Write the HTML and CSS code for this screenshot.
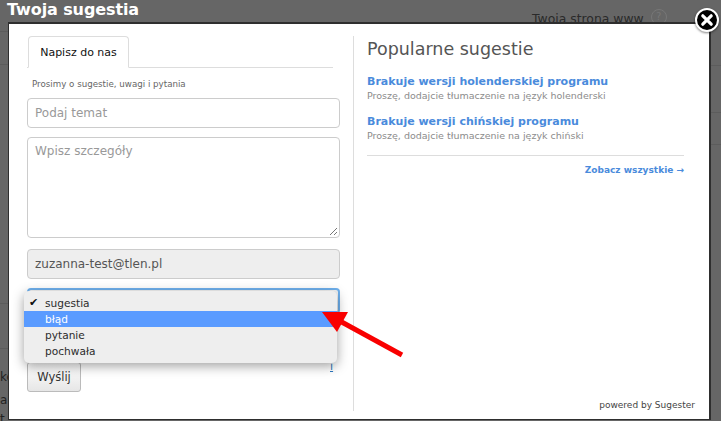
FILE: index.html
```html
<!DOCTYPE html>
<html lang="pl">
<head>
<meta charset="utf-8">
<title>Twoja sugestia</title>
<link rel="stylesheet" href="styles.css">
</head>
<body>
<div class="backdrop">
  <h1 class="page-title">Twoja sugestia</h1>
  <div class="site-label">Twoja strona www <span class="help">?</span></div>
  <i class="rule r1"></i><i class="rule r2"></i><i class="rule r3"></i><i class="rule r4"></i>
  <i class="rule r5"></i><i class="rule r6"></i><i class="rule r7"></i>
  <span class="frag f1">ko</span><span class="frag f2">a</span><span class="frag f3">t</span>
</div>

<main class="modal">
  <section class="form-col">
    <div class="tabs"><div class="tab">Napisz do nas</div></div>
    <p class="hint">Prosimy o sugestie, uwagi i pytania</p>
    <div class="field">Podaj temat</div>
    <div class="field area">Wpisz szczegóły
      <svg class="grip" width="9" height="9" viewBox="0 0 9 9"><path d="M1 8 8 1M5 8 8 5" stroke="#777" fill="none"/></svg>
    </div>
    <div class="field filled">zuzanna-test@tlen.pl</div>
    <div class="select-focus">
      <svg class="updown" width="8" height="13" viewBox="0 0 8 13"><path d="M4 0 8 5H0zM4 13 0 8h8z" fill="#444"/></svg>
    </div>
    <div class="extra-link">i</div>
    <div class="send">Wyślij</div>
    <ul class="menu">
      <li><span class="check">✔</span>sugestia</li>
      <li class="active">błąd</li>
      <li>pytanie</li>
      <li>pochwała</li>
    </ul>
  </section>

  <section class="side-col">
    <h2 class="side-title">Popularne sugestie</h2>
    <a class="sug-link">Brakuje wersji holenderskiej programu</a>
    <p class="sug-text">Proszę, dodajcie tłumaczenie na język holenderski</p>
    <a class="sug-link">Brakuje wersji chińskiej programu</a>
    <p class="sug-text">Proszę, dodajcie tłumaczenie na język chiński</p>
    <div class="see-all"><a>Zobacz wszystkie →</a></div>
    <div class="powered">powered by Sugester</div>
  </section>
</main>

<svg class="close" width="28" height="28" viewBox="0 0 28 28">
  <circle cx="14" cy="14" r="11" fill="#000" stroke="#fff" stroke-width="2"/>
  <path d="M9.8 9.8 18.2 18.2M18.2 9.8 9.8 18.2" stroke="#fff" stroke-width="3.2" stroke-linecap="round"/>
</svg>

<svg class="arrow" width="721" height="421" viewBox="0 0 721 421">
  <path d="M402 355 338 320" stroke="#f90000" stroke-width="5" fill="none"/>
  <path d="M322 312 348 312 337 332z" fill="#f90000"/>
</svg>
</body>
</html>
```

FILE: styles.css
```css
* { box-sizing: border-box; }
html, body { margin: 0; padding: 0; }
body {
  width: 721px;
  height: 421px;
  overflow: hidden;
  position: relative;
  background: #666;
  font-family: "DejaVu Sans", sans-serif;
}
.backdrop { position: absolute; inset: 0; color: #2b2b2b; }
.page-title {
  margin: 0;
  padding: 0 0 0 7px;
  font: bold 16px/19px "DejaVu Sans", sans-serif;
  color: #fff;
  letter-spacing: -0.1px;
}
.site-label { position: absolute; left: 532px; top: 9px; font-size: 12.4px; line-height: 17px; color: #2a2a2a; }
.help {
  display: inline-block; width: 16px; height: 16px; margin-left: 3px;
  border: 1px solid #777; border-radius: 50%;
  color: #777; font-size: 10px; line-height: 14px; text-align: center; vertical-align: 3px;
}
.rule { position: absolute; height: 1px; background: #5c5c5c; }
.r1 { left: 0; width: 8px; top: 31px; }
.r2 { left: 0; width: 8px; top: 64px; }
.r3 { left: 0; width: 8px; top: 303px; }
.r4 { left: 0; width: 8px; top: 348px; }
.r5 { left: 711px; width: 10px; top: 65px; }
.r6 { left: 711px; width: 10px; top: 112px; }
.r7 { left: 711px; width: 10px; top: 144px; }
.frag { position: absolute; left: 0; font-size: 12px; line-height: 14px; color: #222; }
.f1 { top: 370px; left: 0; }
.f2 { top: 393px; }
.f3 { top: 412px; }

.modal {
  position: absolute;
  left: 8px;
  top: 22px;
  width: 703px;
  height: 398px;
  display: flex;
  padding: 12px 0 8px 18px;
  background: #fff;
  border: solid #2e2e2e;
  border-width: 2px 2px 1px 1px;
}
.form-col {
  position: relative;
  width: 327px;
  border-right: 1px solid #ddd;
  flex: none;
}
.tabs { width: 306px; height: 32px; border-bottom: 1px solid #ddd; padding-left: 1px; }
.tab {
  width: 101px; height: 32px;
  padding-top: 9px;
  background: #fff;
  border: 1px solid #ddd; border-bottom-color: #fff;
  border-radius: 4px 4px 0 0;
  font-size: 11px; line-height: 14px; text-align: center; color: #111;
}
.hint { margin: 10px 0 0 5px; font-size: 8.7px; line-height: 12px; color: #666; }
.field {
  position: relative;
  width: 313px; height: 30px;
  margin-top: 8px;
  padding: 0 7px;
  border: 1px solid #ccc;
  border-radius: 4px;
  font-size: 12px; line-height: 28px;
  color: #999;
  background: #fff;
}
.area { height: 101px; margin-top: 9px; line-height: 26px; }
.grip { position: absolute; right: 1px; bottom: 1px; }
.filled { margin-top: 11px; background: #eee; color: #555; }
.select-focus {
  position: relative;
  width: 313px; height: 26px; margin-top: 9px;
  border: 2px solid #6fb1ee;
  border-radius: 4px;
  background: #f5f5f5;
}
.updown { position: absolute; right: 1px; top: 5px; }
.extra-link {
  position: absolute; left: 303px; top: 324px;
  font-size: 11px; line-height: 13px; color: #2a77c0; text-decoration: underline;
}
.send {
  width: 54px; height: 30px; margin-top: 48px;
  border: 1px solid #bbb; border-radius: 3px;
  background: linear-gradient(#fff, #e6e6e6);
  font-size: 11.5px; line-height: 28px; text-align: center; color: #333;
}
.menu {
  position: absolute;
  left: -3px; top: 255px;
  width: 313px;
  margin: 0; padding: 4px 0;
  list-style: none;
  background: #eee;
  border-radius: 5px;
  box-shadow: 0 3px 12px rgba(0,0,0,.38);
  font-size: 10.6px;
  color: #2c2c2c;
}
.menu li { position: relative; height: 16px; padding-left: 21px; line-height: 16px; }
.menu .active { background: #5a9bff; color: #fff; }
.check { position: absolute; left: 5px; top: 0; font-size: 11px; color: #111; }

.side-col { position: relative; flex: 1; padding: 0 25px 0 13px; }
.side-title { margin: 0; font-size: 17.5px; font-weight: normal; line-height: 26px; color: #555; }
.sug-link { display: block; font-size: 11px; font-weight: bold; line-height: 14px; color: #4a8bdc; }
.side-title + .sug-link { margin-top: 13px; }
.sug-text { margin: 0 0 13px; font-size: 9.5px; line-height: 13px; color: #8b8b8b; }
.see-all { margin-top: 0; padding-top: 7px; border-top: 1px solid #ddd; text-align: right; font-size: 9px; font-weight: bold; line-height: 14px; color: #4a8bdc; }
.powered { position: absolute; right: 14px; bottom: 0; font-size: 9px; line-height: 12px; color: #444; }

.close { position: absolute; left: 693px; top: 6px; filter: drop-shadow(0 1px 1px rgba(0,0,0,.5)); }
.arrow { position: absolute; left: 0; top: 0; pointer-events: none; }
```
